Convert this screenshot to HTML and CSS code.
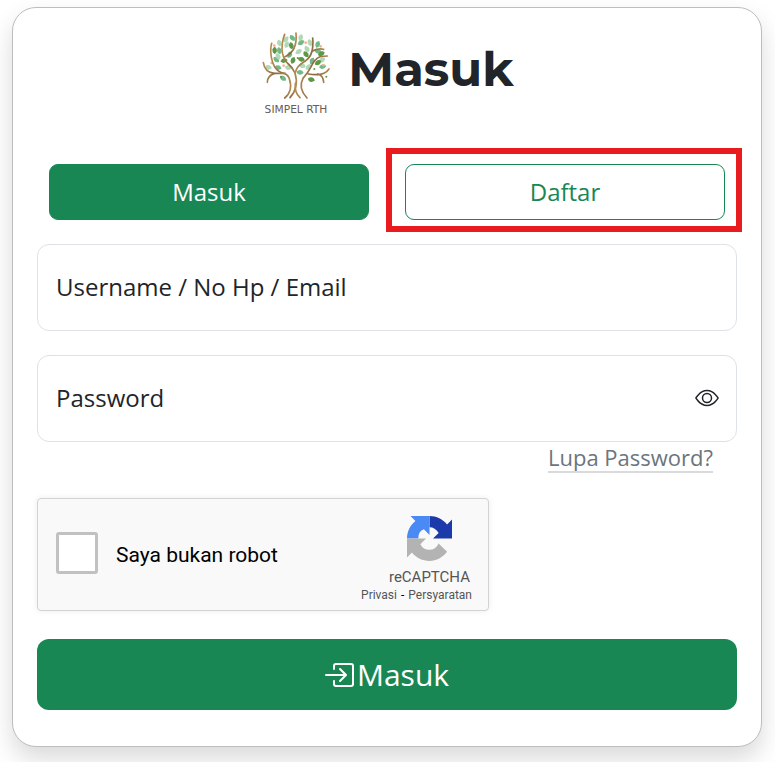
FILE: index.html
```html
<!DOCTYPE html>
<html lang="id">
<head>
<meta charset="utf-8">
<meta name="viewport" content="width=device-width, initial-scale=1">
<title>Masuk - SIMPEL RTH</title>
<link rel="stylesheet" href="styles.css">
</head>
<body>
<main class="card">
  <header class="brand">
    <svg class="logo" viewBox="32 30 216 258" role="img" aria-label="SIMPEL RTH">
      <defs>
        <linearGradient id="bark" x1="0" x2="1"><stop offset="0" stop-color="#b58d52"/><stop offset=".55" stop-color="#8a6844"/><stop offset="1" stop-color="#b08a50"/></linearGradient>
        <path id="leaf" d="M-11 0Q-5 -8 2 -7Q8 -6 11 0Q5 8-2 7Q-8 6-11 0Z"/>
      </defs>
      <g fill="#73b886">
        <use href="#leaf" transform="translate(129 54) rotate(55)"/><use href="#leaf" transform="translate(90 92) rotate(80)"/><use href="#leaf" transform="translate(81 119) rotate(45)"/><use href="#leaf" transform="translate(121 104) rotate(-55)"/><use href="#leaf" transform="translate(155 68) rotate(-25)"/><use href="#leaf" transform="translate(205 73) rotate(-65)"/><use href="#leaf" transform="translate(152 157) rotate(10)"/><use href="#leaf" transform="translate(220 140) rotate(-10)"/><use href="#leaf" transform="translate(86 143) rotate(15)"/><use href="#leaf" transform="translate(206 94) rotate(20)"/><use href="#leaf" transform="translate(188 123) rotate(-60)"/><use href="#leaf" transform="translate(101 175) rotate(35)"/>
      </g>
      <g fill="#b2d8b5">
        <use href="#leaf" transform="translate(110 58) rotate(-50)"/><use href="#leaf" transform="translate(154 53) rotate(-65)"/><use href="#leaf" transform="translate(173 87) rotate(65)"/><use href="#leaf" transform="translate(86 109) rotate(70)"/><use href="#leaf" transform="translate(57 142) rotate(15)"/><use href="#leaf" transform="translate(117 143) rotate(15)"/><use href="#leaf" transform="translate(177 141) rotate(-45)"/><use href="#leaf" transform="translate(90 69) rotate(80)"/><use href="#leaf" transform="translate(218 120) rotate(-25)"/><use href="#leaf" transform="translate(148 95) rotate(-25)"/><use href="#leaf" transform="translate(159 137) rotate(20)"/><use href="#leaf" transform="translate(182 68) rotate(75)"/><use href="#leaf" transform="translate(112 74) rotate(-60)"/>
      </g>
      <g fill="#5e9846">
        <use href="#leaf" transform="translate(76 91) rotate(95)"/><use href="#leaf" transform="translate(126 77) rotate(80)"/><use href="#leaf" transform="translate(170 103) rotate(55)"/><use href="#leaf" transform="translate(104 122) rotate(-10)"/><use href="#leaf" transform="translate(156 118) rotate(20)"/><use href="#leaf" transform="translate(216 101) rotate(-20)"/><use href="#leaf" transform="translate(206 128) rotate(-25)"/><use href="#leaf" transform="translate(186 179) rotate(15)"/><use href="#leaf" transform="translate(131 121) rotate(-65)"/>
        <circle cx="145" cy="114" r="3"/><circle cx="195" cy="147" r="3"/><circle cx="95" cy="170" r="3"/><circle cx="231" cy="170" r="3"/>
      </g>
      <g fill="#f4b48d"><circle cx="169" cy="68" r="4"/><circle cx="214" cy="79" r="4"/><circle cx="103" cy="137" r="4"/><circle cx="222" cy="135" r="4"/><circle cx="67" cy="129" r="4"/><circle cx="75" cy="77" r="4"/></g>
      <g fill="none" stroke="url(#bark)" stroke-width="5" stroke-linecap="round">
        <path d="M106 234Q132 213 120 176Q115 161 96 158Q72 148 66 112Q62 88 67 70"/>
        <path d="M42 128Q46 158 76 160L108 160M54 187Q54 167 76 160"/>
        <path d="M122 233Q150 202 137 159Q128 140 114 129Q99 113 98 88Q98 62 106 43M107 110Q145 94 140 39"/>
        <path d="M138 157Q143 137 167 124Q188 109 190 82Q192 65 190 54M188 94Q207 84 223 88"/>
        <path d="M152 233Q135 218 138 190M173 234Q145 204 161 175Q176 158 184 142Q196 116 212 110L234 108M177 162Q225 170 239 147M205 162Q222 166 223 187"/>
      </g>
      <text class="logo-name" x="140" y="278" text-anchor="middle">SIMPEL RTH</text>
    </svg>
    <h1 class="title">Masuk</h1>
  </header>

  <nav class="tabs">
    <div class="tab-cell"><button class="tab tab-active" type="button">Masuk</button></div>
    <div class="tab-cell tab-marked"><button class="tab" type="button">Daftar</button></div>
  </nav>

  <form class="form">
    <div class="field">
      <input class="field-input" id="username" type="text" autocomplete="username">
      <label class="field-label" for="username">Username / No Hp / Email</label>
    </div>
    <div class="field">
      <input class="field-input" id="password" type="password" autocomplete="current-password">
      <label class="field-label" for="password">Password</label>
      <button class="eye" type="button" aria-label="Tampilkan password">
        <svg viewBox="0 0 16 16" width="24" height="24" fill="currentColor"><path d="M16 8s-3-5.500-8-5.500S0 8 0 8s3 5.500 8 5.500S16 8 16 8M1.173 8a13 13 0 0 1 1.660-2.043C4.120 4.668 5.880 3.500 8 3.500s3.879 1.168 5.168 2.457A13 13 0 0 1 14.828 8q-.086.130-.195.288c-.335.480-.830 1.120-1.465 1.755C11.879 11.332 10.119 12.500 8 12.500s-3.879-1.168-5.168-2.457A13 13 0 0 1 1.172 8z"/><path d="M8 5.500a2.500 2.500 0 1 0 0 5 2.500 2.500 0 0 0 0-5M4.500 8a3.500 3.500 0 1 1 7 0 3.500 3.500 0 0 1-7 0"/></svg>
      </button>
    </div>
    <a class="forgot" href="#">Lupa Password?</a>

    <div class="captcha">
      <input class="captcha-box" id="robot" type="checkbox">
      <label class="captcha-label" for="robot">Saya bukan robot</label>
      <div class="captcha-brand">
        <svg class="captcha-logo" viewBox="0 0 64 64" aria-hidden="true">
          <path fill="#1c3aa9" d="M32 0C42 0 51 4.500 57 12L64 5V32H37L45 24Q40 16 32 16Z"/>
          <path fill="#4a8af4" d="M32 0H5L12 7C4.500 13 0 22 0 32H16Q16 22 24 19L32 27Z"/>
          <path fill="#b3b3b3" d="M0 32V59L7 52C13 59.500 22 64 32 64C42 64 51 59 57 51L45 39C42 45 38 48 32 48Q23 48 19 40L27 32Z"/>
        </svg>
        <span class="captcha-name">reCAPTCHA</span>
        <span class="captcha-links"><a href="#">Privasi</a><span class="captcha-dash">-</span><a href="#">Persyaratan</a></span>
      </div>
    </div>

    <button class="submit" type="submit">
      <svg class="submit-icon" viewBox="0 0 30 30" fill="none" stroke="currentColor" stroke-width="2" stroke-linecap="round" stroke-linejoin="round"><path d="M9 9V6Q9 4 11 4H26Q28 4 28 6V24Q28 26 26 26H11Q9 26 9 24V21M1 15H20M15 9L21 15L15 21"/></svg>Masuk
    </button>
  </form>
</main>
</body>
</html>
```

FILE: styles.css
```css
* { box-sizing: border-box; }

body {
  margin: 0;
  padding: 7px 13px 16px 12px;
  background: #fff;
  color: #212529;
  font: 24px/36px "Open Sans", "Noto Sans", sans-serif;
}

button, input { font: inherit; }

.card {
  padding: 22px 24px 36px;
  border: 1px solid #bdbdbd;
  border-radius: 24px;
  background: #fff;
  box-shadow: 0 12px 24px rgba(0, 0, 0, .15);
}

.brand {
  display: flex;
  justify-content: center;
  align-items: center;
  gap: 16px;
}

.logo { width: 72px; height: 86px; overflow: visible; }

.logo-name {
  fill: #6d5a4e;
  font: 32px "DejaVu Sans", sans-serif;
}

.title {
  margin: 0;
  padding-bottom: 8px;
  font: 700 48px/60px Montserrat, Inter, sans-serif;
}

.tabs {
  display: flex;
  gap: 36px;
  margin: 48px 12px 24px;
}

.tab-cell { position: relative; flex: 1; }

.tab-marked::after {
  content: "";
  position: absolute;
  inset: -16px -17px -12px -19px;
  border: 6px solid #e81b1e;
  pointer-events: none;
}

.tab {
  display: block;
  width: 100%;
  height: 56px;
  padding: 0;
  border: 1px solid #198754;
  border-radius: 9px;
  background: #fff;
  color: #198754;
  cursor: pointer;
}

.tab-active { background: #198754; color: #fff; }

.form { display: flex; flex-direction: column; }

.field {
  display: grid;
  grid-template-columns: 1fr auto;
  align-items: center;
  height: 87px;
}

.field + .field { margin-top: 24px; }

.field-input {
  grid-area: 1 / 1 / 2 / 3;
  width: 100%;
  height: 100%;
  padding: 0 18px;
  border: 1px solid #dee2e6;
  border-radius: 12px;
  background: #fff;
  color: inherit;
}

.field-label {
  grid-area: 1 / 1;
  padding: 0 0 2px 19px;
  pointer-events: none;
}

.field-input:focus + .field-label { opacity: .4; }

.eye {
  grid-area: 1 / 2;
  display: flex;
  margin-right: 18px;
  padding: 0 0 2px;
  border: 0;
  background: none;
  color: #212529;
  cursor: pointer;
}

.forgot {
  align-self: flex-end;
  margin: 0 24px 26px 0;
  color: #6c757d;
  font-size: 22px;
  line-height: 30px;
  text-decoration: underline #d8dadc 2px;
  text-underline-offset: 5px;
}

.captcha {
  display: flex;
  align-items: center;
  width: 452px;
  max-width: 100%;
  height: 113px;
  padding: 0 16px 0 18px;
  border: 1px solid #d3d3d3;
  border-radius: 4px;
  background: #f9f9f9;
  box-shadow: 0 0 6px rgba(0, 0, 0, .08);
  color: #000;
  font: 21px/24px Roboto, sans-serif;
}

.captcha-box {
  appearance: none;
  width: 42px;
  height: 42px;
  margin: 0 18px 4px 0;
  border: 3px solid #c1c1c1;
  border-radius: 3px;
  background: #fff;
}

.captcha-box:checked { background: #198754; }

.captcha-brand {
  display: flex;
  flex-direction: column;
  align-items: flex-end;
  margin-left: auto;
  padding-top: 10px;
  color: #555;
}

.captcha-logo { width: 45px; height: 45px; margin: 0 20px 6px 0; }

.captcha-name { margin-right: 2px; font-size: 15px; line-height: 20px; }

.captcha-links { font-size: 12px; line-height: 16px; }

.captcha-links a { color: inherit; text-decoration: none; }

.captcha-dash { margin: 0 4px; color: #000; }

.submit {
  display: flex;
  justify-content: center;
  align-items: center;
  gap: 2px;
  height: 71px;
  margin-top: 28px;
  border: 0;
  border-radius: 12px;
  background: #198754;
  color: #fff;
  font-size: 30px;
  cursor: pointer;
}

.submit-icon { width: 30px; height: 30px; }
```
